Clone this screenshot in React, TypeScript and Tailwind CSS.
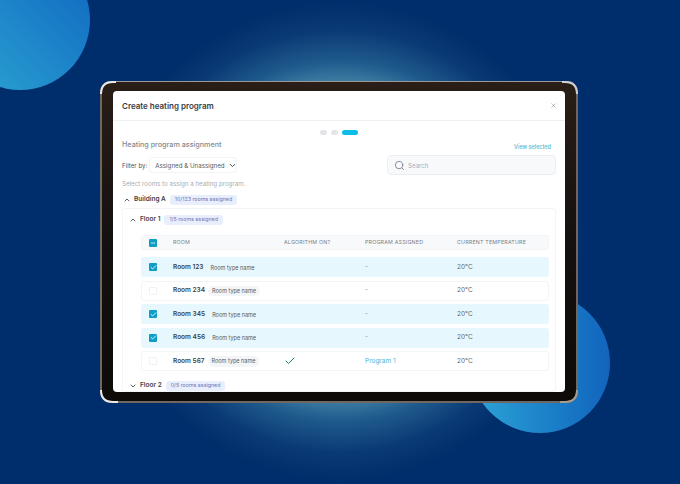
import React from "react";
import { ChevronUp, ChevronDown, Search, X, Check, Minus } from "lucide-react";

const rooms = [
  { name: "Room 123", sel: true, pill: false, algo: false, prog: "-" },
  { name: "Room 234", sel: false, pill: true, algo: false, prog: "-" },
  { name: "Room 345", sel: true, pill: false, algo: false, prog: "-" },
  { name: "Room 456", sel: true, pill: false, algo: false, prog: "-" },
  { name: "Room 567", sel: false, pill: true, algo: true, prog: "Program 1" },
];

function Row({ r }: { r: (typeof rooms)[number] }) {
  return (
    <div
      className={`grid grid-cols-[24px_111px_81px_92px_1fr] items-center h-[20px] rounded-[3px] ${
        r.sel ? "bg-[#e6f7fd] pl-[8px]" : "bg-white border border-[#f3f4f7] pl-[7px]"
      }`}
    >
      <div className="flex items-center">
        {r.sel ? (
          <div className="w-[8px] h-[8px] rounded-[1px] bg-[#0e9dc4] flex items-center justify-center">
            <Check size={7} strokeWidth={3} className="text-white" />
          </div>
        ) : (
          <div className="w-[8px] h-[8px] rounded-[1px] bg-white border border-[#f0f1f4]" />
        )}
      </div>
      <div className="flex items-center gap-[3px] whitespace-nowrap pt-[1px]">
        <span className="text-[6.5px] font-semibold text-[#40444b]">{r.name}</span>
        <span className={`text-[5.5px] text-[#555a62] rounded-full px-[4px] py-[1px] ${r.pill ? "bg-[#f4f5f7]" : ""}`}>
          Room type name
        </span>
      </div>
      <div className="flex items-center">
        {r.algo && <Check size={12} strokeWidth={2} className="text-[#17805f]" />}
      </div>
      <div className={`text-[6.5px] pt-[1px] ${r.prog === "-" ? "text-[#8a9099]" : "text-[#4fb3d0]"}`}>{r.prog}</div>
      <div className="text-[6.5px] text-[#62686f] pt-[1px]">20°C</div>
    </div>
  );
}

function Pill({ children }: { children: React.ReactNode }) {
  return (
    <span className="text-[5.3px] text-[#6a74b8] bg-[#e9eefc] rounded-[3px] px-[5px] py-[1px] ml-[1px] whitespace-nowrap">
      {children}
    </span>
  );
}

export default function App() {
  return (
    <div className="relative w-[680px] h-[484px] overflow-hidden flex items-center justify-center bg-[#002d6b] font-['Inter',sans-serif]">
      <div className="absolute left-[100px] top-[1px] w-[480px] h-[480px] rounded-full bg-[radial-gradient(closest-side,#4a86a8_0%,#3f7ea3_66%,#1f5a8c_75%,#0a3a75_88%,#002d6b_100%)]" />
      <div className="absolute left-[-50px] top-[-50px] w-[140px] h-[140px] rounded-full bg-gradient-to-bl from-[#1263bf] to-[#2fa6d2]" />
      <div className="absolute left-[470px] top-[293px] w-[140px] h-[140px] rounded-full bg-gradient-to-r from-[#2ea4d6] to-[#1264bd]" />
      <div className="relative mr-[2px] w-[478px] h-[322px] rounded-[11px] bg-gradient-to-b from-[#2a1e17] via-[#141110] to-[#0d0a08] border-t-[1px] border-l-[2px] border-r-[2px] border-b-[2px] border-[#6f6760] border-t-[#9a9a9a] pl-[11px] pr-[11px] pt-[9px] pb-[9px]">
        <svg className="absolute left-[-2px] top-[-1px]" width="478" height="322" viewBox="0 0 478 322" fill="none">
          <path d="M1 13 Q1 1 13 1 L16 1" stroke="#e8e8e8" strokeWidth="2" />
          <path d="M462 1 L465 1 Q477 1 477 13" stroke="#d0d0d0" strokeWidth="2" />
          <path d="M1 309 Q1 321 13 321 L18 321" stroke="#e8e8e8" strokeWidth="2" />
          <path d="M460 321 L465 321 Q477 321 477 309" stroke="#a89c90" strokeWidth="2" />
        </svg>
        <div className="relative w-full h-full rounded-[4px] bg-white overflow-hidden flex flex-col">
          <div className="h-[30px] shrink-0 flex items-center justify-between pl-[9px] pr-[8px] border-b border-[#eef0f2]">
            <span className="text-[8px] font-semibold text-[#383d43]">Create heating program</span>
            <X size={7} className="text-[#8a9099]" />
          </div>
          <div className="flex items-center justify-center gap-[4px] h-[6px] mt-[8px]">
            <span className="w-[7px] h-[5px] rounded-full bg-[#e2e4e8]" />
            <span className="w-[7px] h-[5px] rounded-full bg-[#e2e4e8]" />
            <span className="w-[16px] h-[5px] rounded-full bg-[#0dbde9]" />
          </div>
          <div className="flex items-start justify-between pl-[9px] pr-[14px] mt-[3px] h-[12px]">
            <span className="text-[7.2px] font-medium text-[#858b92] leading-[12px] pt-[1px]">Heating program assignment</span>
            <span className="text-[5.5px] font-medium text-[#4fb8d4] leading-[14px] mt-[2px]">View selected</span>
          </div>
          <div className="flex items-center justify-between pl-[9px] pr-[9px] mt-[5px] h-[20px]">
            <div className="flex items-center gap-[2px] whitespace-nowrap">
              <span className="text-[6.2px] text-[#4f545c] pt-[1px]">Filter by:</span>
              <div className="flex items-center gap-[3px] h-[16px] w-[88px] px-[5px] rounded-[3px] border border-[#f2f3f5] pt-[1px]">
                <span className="text-[6.2px] text-[#555a62]">Assigned &amp; Unassigned</span>
                <ChevronDown size={9} strokeWidth={2.5} className="text-[#3a3f47] shrink-0" />
              </div>
            </div>
            <div className="flex items-center gap-[3px] w-[169px] h-[20px] px-[6px] rounded-[4px] bg-[#f8f9fb] border border-[#eceef2]">
              <Search size={11} className="text-[#7c828a]" />
              <span className="text-[6.2px] text-[#a8adb4] pt-[1px]">Search</span>
            </div>
          </div>
          <div className="pl-[9px] mt-[4px] text-[6.2px] leading-[10px] text-[#a8adb3]">Select rooms to assign a heating program.</div>
          <div className="flex items-center pl-[10px] mt-[6px] h-[10px] gap-[3px]">
            <ChevronUp size={8} strokeWidth={2.5} className="text-[#3a3f47]" />
            <span className="text-[6.5px] font-semibold text-[#40444b]">Building A</span>
            <Pill>10/123 rooms assigned</Pill>
          </div>
          <div className="mx-[9px] mt-[3px] border border-[#f3f4f6] rounded-[3px] pl-[6px] pr-[6px] pt-[6px] flex-1">
            <div className="flex items-center h-[10px] gap-[3px]">
              <ChevronUp size={8} strokeWidth={2.5} className="text-[#3a3f47]" />
              <span className="text-[6.5px] font-semibold text-[#40444b]">Floor 1</span>
              <Pill>1/5 rooms assigned</Pill>
            </div>
            <div className="ml-[12px] mt-[10px] flex flex-col gap-[3.4px]">
              <div className="grid grid-cols-[24px_111px_81px_92px_1fr] items-center h-[15px] rounded-[3px] bg-[#f7f9fb] border border-[#f1f3f6] pl-[7px] mb-[4px] text-[5.3px] text-[#7a8088] tracking-[0.2px] whitespace-nowrap">
                <div className="w-[8px] h-[8px] rounded-[1px] bg-[#0e9dc4] flex items-center justify-center">
                  <Minus size={6} strokeWidth={3} className="text-white" />
                </div>
                <div>ROOM</div>
                <div>ALGORITHM ON?</div>
                <div>PROGRAM ASSIGNED</div>
                <div>CURRENT TEMPERATURE</div>
              </div>
              {rooms.map((r) => (
                <Row key={r.name} r={r} />
              ))}
            </div>
            <div className="flex items-center h-[10px] gap-[3px] mt-[10px]">
              <ChevronDown size={8} strokeWidth={2.5} className="text-[#3a3f47]" />
              <span className="text-[6.5px] font-semibold text-[#40444b]">Floor 2</span>
              <Pill>0/5 rooms assigned</Pill>
            </div>
          </div>
        </div>
      </div>
    </div>
  );
}
